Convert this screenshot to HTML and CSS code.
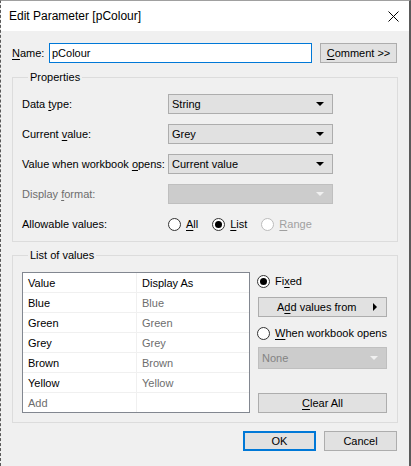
FILE: index.html
```html
<!DOCTYPE html>
<html>
<head>
<meta charset="utf-8">
<link rel="stylesheet" href="styles.css">
</head>
<body>
<div class="window">
  <div class="titlebar">
    <span class="title">Edit Parameter [pColour]</span>
    <svg class="close" width="11" height="11" viewBox="0 0 11 11"><path d="M0.5 0.5 L10.5 10.5 M10.5 0.5 L0.5 10.5" stroke="#000" stroke-width="1" fill="none"/></svg>
  </div>
  <div class="content">
    <div class="name-row">
      <span class="name-label"><u>N</u>ame:</span>
      <div class="textbox">pColour</div>
      <div class="btn comment"><u>C</u>omment &gt;&gt;</div>
    </div>

    <fieldset class="group props">
      <legend>Properties</legend>
      <div class="prow">
        <span class="plabel">Data <u>t</u>ype:</span>
        <div class="combo"><span>String</span><span class="arrow"></span></div>
      </div>
      <div class="prow">
        <span class="plabel">Current <u>v</u>alue:</span>
        <div class="combo"><span>Grey</span><span class="arrow"></span></div>
      </div>
      <div class="prow">
        <span class="plabel">Value when workbook <u>o</u>pens:</span>
        <div class="combo"><span>Current value</span><span class="arrow"></span></div>
      </div>
      <div class="prow">
        <span class="plabel disabled">Display <u>f</u>ormat:</span>
        <div class="combo off"><span></span><span class="arrow"></span></div>
      </div>
      <div class="prow">
        <span class="plabel">Allowable values:</span>
        <div class="radios">
          <label class="radio"><span class="dot"></span><span><u>A</u>ll</span></label>
          <label class="radio"><span class="dot on"></span><span><u>L</u>ist</span></label>
          <label class="radio off"><span class="dot"></span><span><u>R</u>ange</span></label>
        </div>
      </div>
    </fieldset>

    <fieldset class="group list">
      <legend>List of values</legend>
      <div class="list-inner">
        <div class="table">
          <div class="trow"><div class="cell">Value</div><div class="cell">Display As</div></div>
          <div class="trow"><div class="cell">Blue</div><div class="cell dim">Blue</div></div>
          <div class="trow"><div class="cell">Green</div><div class="cell dim">Green</div></div>
          <div class="trow"><div class="cell">Grey</div><div class="cell dim">Grey</div></div>
          <div class="trow"><div class="cell">Brown</div><div class="cell dim">Brown</div></div>
          <div class="trow"><div class="cell">Yellow</div><div class="cell dim">Yellow</div></div>
          <div class="trow last"><div class="cell dim">Add</div><div class="cell"></div></div>
        </div>
        <div class="side">
          <label class="radio side-radio"><span class="dot on"></span><span>Fi<u>x</u>ed</span></label>
          <div class="btn side-btn addvals"><span>A<u>d</u>d values from</span><span class="rarrow"></span></div>
          <label class="radio side-radio r2"><span class="dot"></span><span><u>W</u>hen workbook opens</span></label>
          <div class="combo off none"><span>None</span><span class="arrow"></span></div>
          <div class="spacer"></div>
          <div class="btn side-btn"><u>C</u>lear All</div>
        </div>
      </div>
    </fieldset>

    <div class="footer">
      <div class="btn ok">OK</div>
      <div class="btn">Cancel</div>
    </div>
  </div>
</div>
</body>
</html>
```

FILE: styles.css
```css
* { box-sizing: border-box; }
html, body { margin: 0; padding: 0; background: #f0f0f0; }
body {
  font-family: "Liberation Sans", Arial, sans-serif;
  font-size: 11px;
  color: #000;
  white-space: nowrap;
}
u { text-decoration: underline; text-underline-offset: 2px; }

.window {
  width: 411px;
  height: 466px;
  border-left: 1px dashed #5a5a5a;
  border-right: 2px solid #5a5a5a;
  border-top: 1px solid #a0a0a0;
  background: #f0f0f0;
  display: flex;
  flex-direction: column;
}

.titlebar {
  height: 30px;
  background: #fff;
  display: flex;
  align-items: center;
  justify-content: space-between;
  padding: 0 10px 0 8px;
}
.title { font-size: 12px; }
.close { display: block; }

.content {
  flex: 1;
  padding: 12px 11px 0 11px;
  display: flex;
  flex-direction: column;
}

.name-row {
  display: flex;
  align-items: center;
  height: 20px;
}
.name-label { width: 37px; flex-shrink: 0; }
.textbox {
  width: 263px;
  flex-shrink: 0;
  height: 20px;
  background: #fff;
  border: 1px solid #0078d7;
  padding-left: 2px;
  line-height: 18px;
}
.btn {
  height: 20px;
  background: #e1e1e1;
  border: 1px solid #adadad;
  display: flex;
  align-items: center;
  justify-content: center;
  flex-shrink: 0;
}
.comment { width: 77px; margin-left: 8px; }

.group {
  margin: 7px 0 0 0;
  padding: 0;
  border: 1px solid #dcdcdc;
  min-width: 0;
}
.group legend {
  padding: 0 2px;
  margin-left: 6px;
  line-height: 14px;
  height: 14px;
}
.props { padding: 10px 0 7px 9px; }
.prow {
  display: flex;
  align-items: center;
  height: 20px;
  margin-bottom: 10px;
}
.prow:last-child { margin-bottom: 0; }
.plabel { width: 146px; flex-shrink: 0; }
.disabled { color: #6d6d6d; }

.combo {
  width: 165px;
  flex-shrink: 0;
  height: 20px;
  background: #e1e1e1;
  border: 1px solid #adadad;
  display: flex;
  align-items: center;
  justify-content: space-between;
  padding: 0 8px 0 3px;
}
.arrow {
  width: 0; height: 0;
  border-left: 4px solid transparent;
  border-right: 4px solid transparent;
  border-top: 4px solid #000;
}
.combo.off { background: #cccccc; border-color: #bfbfbf; color: #838383; }
.combo.off .arrow { border-top-color: #f0f0f0; }

.radios { display: flex; align-items: center; }
.radio { display: flex; align-items: center; margin-right: 14px; }
.dot {
  width: 13px; height: 13px;
  flex-shrink: 0;
  border: 1px solid #333;
  border-radius: 50%;
  background: #fff;
  margin-right: 5px;
  display: flex;
  align-items: center;
  justify-content: center;
}
.dot.on::after {
  content: "";
  width: 7px; height: 7px;
  border-radius: 50%;
  background: #000;
}
.radio.off { color: #a0a0a0; }
.radio.off .dot { border-color: #bcbcbc; }

.list { margin-top: 6px; padding: 10px 10px 9px 9px; }
.list-inner { display: flex; }
.table {
  width: 228px;
  flex-shrink: 0;
  border: 1px solid #828790;
  background: #fff;
}
.trow {
  display: grid;
  grid-template-columns: 114px 1fr;
  height: 20px;
  border-bottom: 1px solid #f0f0f0;
}
.trow.last { border-bottom: 0; height: 19px; }
.cell {
  padding-left: 5px;
  display: flex;
  align-items: center;
}
.cell:first-child { border-right: 1px solid #f0f0f0; }
.dim { color: #6d6d6d; }

.side {
  margin-left: 7px;
  width: 130px;
  display: flex;
  flex-direction: column;
}
.side-radio { height: 16px; margin-top: 1px; margin-right: 0; }
.side-btn { width: 129px; margin-left: 1px; }
.addvals { margin-top: 8px; justify-content: space-between; padding: 0 9px 0 18px; }
.rarrow {
  width: 0; height: 0;
  border-top: 4px solid transparent;
  border-bottom: 4px solid transparent;
  border-left: 4px solid #000;
}
.r2 { margin-top: 8px; }
.none { width: 129px; height: 22px; margin-left: 1px; margin-top: 6px; }
.spacer { flex: 1; }

.footer {
  display: flex;
  justify-content: flex-end;
  margin-top: 8px;
  padding-right: 1px;
}
.footer .btn { width: 73px; margin-left: 8px; }
.footer .ok { border: 2px solid #0078d7; }
```
